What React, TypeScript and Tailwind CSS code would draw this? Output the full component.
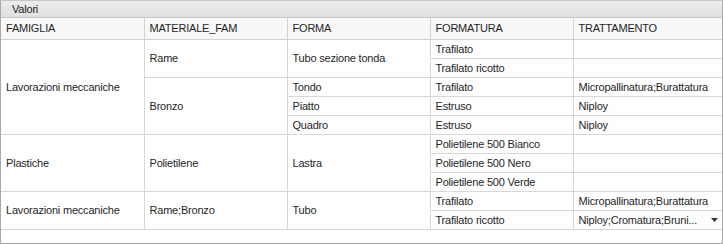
import React from 'react';

type Cell = { text: string; span?: number };

// each row lists only the cells that start on it (rowspans cover the rest)
const rows: Cell[][] = [
  [
    { text: 'Lavorazioni meccaniche', span: 5 },
    { text: 'Rame', span: 2 },
    { text: 'Tubo sezione tonda', span: 2 },
    { text: 'Trafilato' },
    { text: '' },
  ],
  [{ text: 'Trafilato ricotto' }, { text: '' }],
  [
    { text: 'Bronzo', span: 3 },
    { text: 'Tondo' },
    { text: 'Trafilato' },
    { text: 'Micropallinatura;Burattatura' },
  ],
  [{ text: 'Piatto' }, { text: 'Estruso' }, { text: 'Niploy' }],
  [{ text: 'Quadro' }, { text: 'Estruso' }, { text: 'Niploy' }],
  [
    { text: 'Plastiche', span: 3 },
    { text: 'Polietilene', span: 3 },
    { text: 'Lastra', span: 3 },
    { text: 'Polietilene 500 Bianco' },
    { text: '' },
  ],
  [{ text: 'Polietilene 500 Nero' }, { text: '' }],
  [{ text: 'Polietilene 500 Verde' }, { text: '' }],
  [
    { text: 'Lavorazioni meccaniche', span: 2 },
    { text: 'Rame;Bronzo', span: 2 },
    { text: 'Tubo', span: 2 },
    { text: 'Trafilato' },
    { text: 'Micropallinatura;Burattatura' },
  ],
];

const columns = ['FAMIGLIA', 'MATERIALE_FAM', 'FORMA', 'FORMATURA', 'TRATTAMENTO'];

export default function App() {
  return (
    <div
      className="w-[723px] h-[244px] bg-white text-[11px] tracking-[-0.2px] text-[#1f1f1f]"
      style={{ fontFamily: '"Liberation Sans", Arial, sans-serif' }}
    >
      <div className="h-full flex flex-col border border-[#a8a8a8] border-t-[#c8c8c8]">
        {/* Band header */}
        <div className="h-[17px] flex items-center pl-[11px] bg-gradient-to-b from-[#ececec] to-[#e0e0e0] border-b border-[#c8c8c8] text-[#222]">
          Valori
        </div>

        <table className="w-full table-fixed border-collapse">
          <colgroup>
            <col className="w-[143px]" />
            <col className="w-[143px]" />
            <col className="w-[143px]" />
            <col className="w-[143px]" />
            <col />
          </colgroup>
          <thead>
            <tr className="h-[21px] bg-[#f8f8f8]">
              {columns.map((c, i) => (
                <th
                  key={c}
                  className={`text-left font-normal pl-[5px] border-b border-[#d2d2d2] ${
                    i < columns.length - 1 ? 'border-r' : ''
                  } border-r-[#d2d2d2]`}
                >
                  {c}
                </th>
              ))}
            </tr>
          </thead>
          <tbody>
            {rows.map((r, ri) => (
              <tr key={ri} className="h-[19px]">
                {r.map((cell, ci) => (
                  <td
                    key={ci}
                    rowSpan={cell.span}
                    className="pl-[5px] py-0 border-b border-r last:border-r-0 border-[#d8d8d8] leading-[18px] whitespace-nowrap"
                  >
                    {cell.text}
                  </td>
                ))}
              </tr>
            ))}
            <tr className="h-[19px]">
              <td className="pl-[5px] py-0 border-b border-r border-[#d8d8d8] leading-[18px]">
                Trafilato ricotto
              </td>
              <td className="pl-[5px] pr-[4px] py-0 border-b border-[#d8d8d8] leading-[18px]">
                <div className="flex items-center justify-between">
                  <span className="whitespace-nowrap">Niploy;Cromatura;Bruni...</span>
                  <svg width="7" height="4" viewBox="0 0 7 4">
                    <path d="M0 0h7l-3.5 4z" fill="#333" />
                  </svg>
                </div>
              </td>
            </tr>
          </tbody>
        </table>
        <div className="flex-1" />
      </div>
    </div>
  );
}
